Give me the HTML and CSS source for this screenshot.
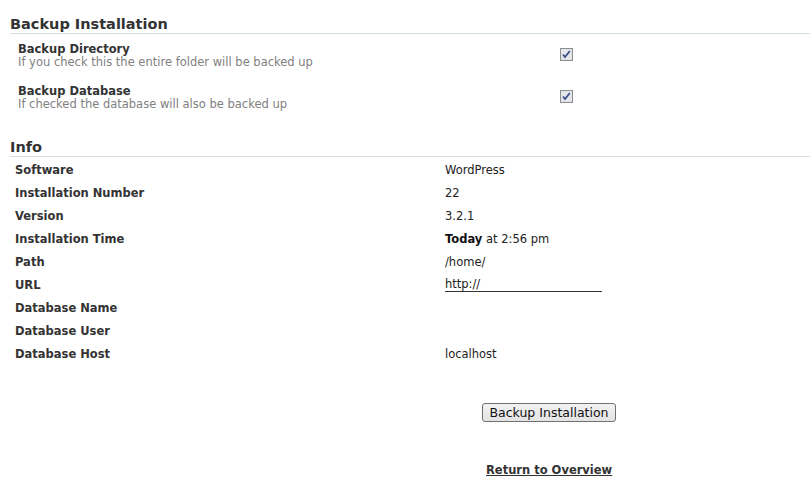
FILE: index.html
```html
<!DOCTYPE html>
<html>
<head>
<meta charset="utf-8">
<link rel="stylesheet" href="styles.css">
</head>
<body>
<div class="page">
  <h2 class="section-title">Backup Installation</h2>
  <div class="option">
    <div class="option-text">
      <div class="option-label">Backup Directory</div>
      <div class="option-desc">If you check this the entire folder will be backed up</div>
    </div>
    <span class="check"><svg width="13" height="13" viewBox="0 0 13 13"><rect x="0.5" y="0.5" width="12" height="12" fill="#dcdce4" stroke="#8e8f8f"/><rect x="1.5" y="1.5" width="10" height="10" fill="#e6e7ea"/><path d="M3 6.5 L5 9 L9.8 3" fill="none" stroke="#3d4f8e" stroke-width="1.8"/></svg></span>
  </div>
  <div class="option">
    <div class="option-text">
      <div class="option-label">Backup Database</div>
      <div class="option-desc">If checked the database will also be backed up</div>
    </div>
    <span class="check"><svg width="13" height="13" viewBox="0 0 13 13"><rect x="0.5" y="0.5" width="12" height="12" fill="#dcdce4" stroke="#8e8f8f"/><rect x="1.5" y="1.5" width="10" height="10" fill="#e6e7ea"/><path d="M3 6.5 L5 9 L9.8 3" fill="none" stroke="#3d4f8e" stroke-width="1.8"/></svg></span>
  </div>

  <h2 class="section-title info-title">Info</h2>
  <table class="info">
    <tr><th>Software</th><td>WordPress</td></tr>
    <tr><th>Installation Number</th><td>22</td></tr>
    <tr><th>Version</th><td>3.2.1</td></tr>
    <tr><th>Installation Time</th><td><b>Today</b> at 2:56 pm</td></tr>
    <tr><th>Path</th><td>/home/</td></tr>
    <tr><th>URL</th><td><a class="url" href="#">http://</a></td></tr>
    <tr><th>Database Name</th><td></td></tr>
    <tr><th>Database User</th><td></td></tr>
    <tr><th>Database Host</th><td>localhost</td></tr>
  </table>

  <div class="actions">
    <button class="btn">Backup Installation</button>
  </div>
  <div class="return">
    <a href="#">Return to Overview</a>
  </div>
</div>
</body>
</html>
```
FILE: styles.css
```css
html, body {
  margin: 0;
  padding: 0;
  background: #ffffff;
}
body {
  font-family: "DejaVu Sans", Verdana, sans-serif;
  color: #333333;
  font-size: 11.5px;
}
.page {
  padding: 15px 0 0 10px;
}
.section-title {
  margin: 0;
  font-size: 14.5px;
  font-weight: bold;
  color: #333;
  line-height: 18px;
  border-bottom: 1px solid #d3dfe4;
}
.option {
  display: flex;
  align-items: flex-start;
  padding: 9px 0 0 8px;
  height: 33px;
}
.option-text {
  width: 542px;
}
.option-label {
  font-weight: bold;
  line-height: 13px;
  color: #333;
}
.option-desc {
  color: #808080;
  line-height: 13px;
  font-size: 11.5px;
}
.check {
  display: block;
  margin-top: 5px;
  height: 13px;
}
.info-title {
  margin-top: 20px;
}
.info {
  border-collapse: collapse;
  margin-top: 1px;
}
.info th, .info td {
  padding: 0;
  height: 23px;
  text-align: left;
  vertical-align: middle;
}
.info th {
  width: 430px;
  padding-left: 5px;
  font-weight: bold;
}
.info td {
  color: #222;
}
.info td b { color: #111; }
.url {
  display: inline-block;
  width: 157px;
  color: #222;
  text-decoration: none;
  border-bottom: 1px solid #333;
  line-height: 14px;
}
.actions {
  padding: 38px 0 0 472px;
}
.btn {
  font-family: "DejaVu Sans", Verdana, sans-serif;
  font-size: 12.5px;
  color: #111;
  height: 19px;
  width: 134px;
  padding: 0;
  border: 1px solid #707070;
  border-radius: 3px;
  background: linear-gradient(#f2f2f2, #e3e3e3);
  line-height: 16px;
}
.return {
  padding: 41px 0 0 476px;
}
.return a {
  font-weight: bold;
  color: #333;
  text-decoration: underline;
}
```
